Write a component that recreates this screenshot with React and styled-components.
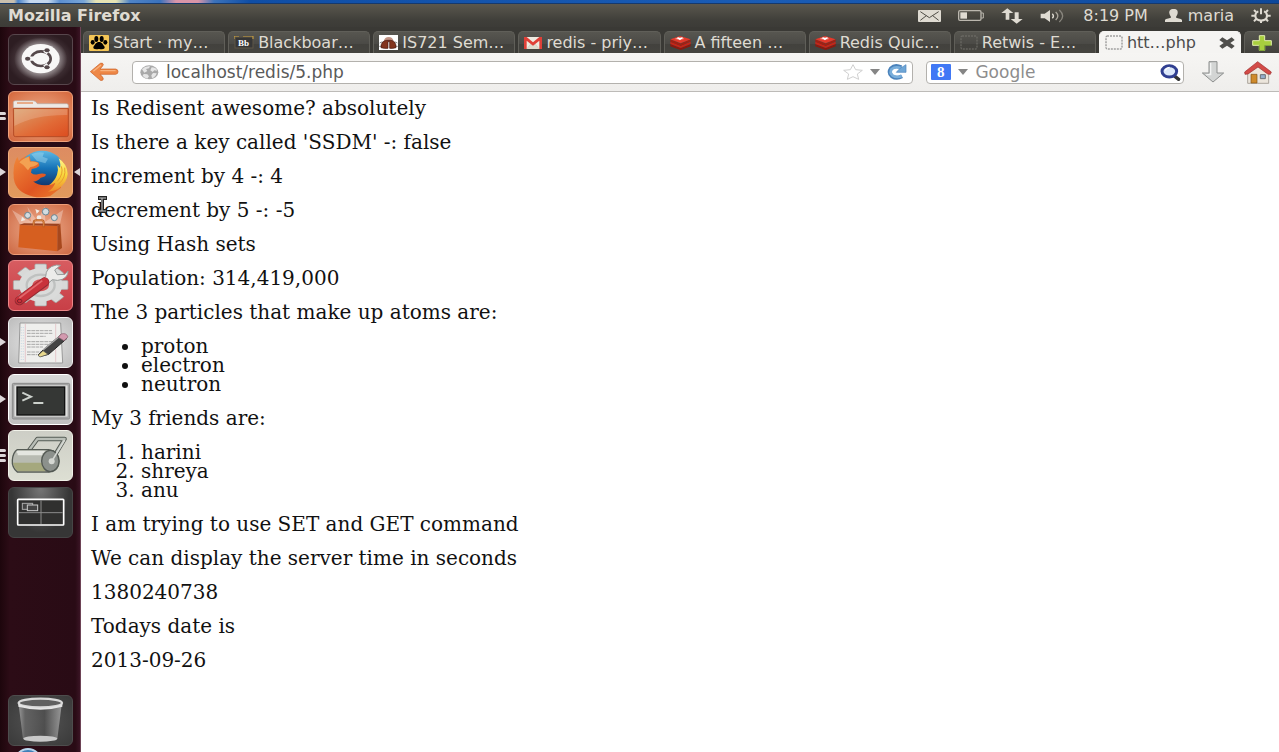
import React from "react";
import styled, { createGlobalStyle } from "styled-components";

const Global = createGlobalStyle`
  * { box-sizing: border-box; }
  html, body { margin: 0; background: #fff; }
  button, input { font: inherit; color: inherit; }
`;

const uiFont = `"DejaVu Sans", "Noto Sans", sans-serif`;

const Desktop = styled.div`
  min-height: 100vh;
  display: flex;
  flex-direction: column;
  font-family: ${uiFont};
  font-size: 16px;
`;

const HostStrip = styled.div`
  height: 4px;
  flex: none;
  border-bottom: 1px solid #16396c;
  background: linear-gradient(90deg, #c9bfae 0 14px, #4a83c8 18px, #c5d8ef 30px 48px, #5c8fd0 60px, #78a5d8 84px, #e6e3b4 96px 116px, #4f84c7 130px, #3a72bd 160px, #d995a8 176px 198px, #3c73bb 214px, #0f4ea6 250px, #1a5cb5 60%, #0d489b);
`;

const TopPanel = styled.header`
  height: 23px;
  flex: none;
  display: flex;
  align-items: center;
  justify-content: space-between;
  padding: 0 8px;
  color: #dfdbd2;
  background: linear-gradient(#5a574e, #403f3a 70%, #3c3b37);
`;

const AppName = styled.h1`
  margin: 0;
  font-size: 16px;
  line-height: 20px;
  font-weight: 700;
`;

const Indicators = styled.div`
  display: flex;
  align-items: center;
  gap: 17px;
`;

const Indicator = styled.button`
  display: flex;
  align-items: center;
  gap: 6px;
  padding: 0;
  border: 0;
  background: none;
  line-height: 20px;
  svg { display: block; }
`;

const Body = styled.div`
  flex: 1;
  display: flex;
`;

const Launcher = styled.nav`
  width: 81px;
  flex: none;
  display: flex;
  flex-direction: column;
  justify-content: space-between;
  padding: 7px 0 6px 8px;
  position: relative;
  overflow: hidden;
  border-right: 1px solid #6d4356;
  background: linear-gradient(90deg, #1d060c, #2c0c16 12%, #290b15 94%, #3a1424);
`;

const LauncherGroup = styled.div`
  height: 67vh;
  display: flex;
  flex-direction: column;
  justify-content: space-between;
`;

const Tile = styled.button`
  display: block;
  flex: none;
  position: relative;
  width: 65px;
  height: 51px;
  padding: 0;
  border: 1px solid ${(p) => p.$edge};
  border-radius: 6px;
  background: ${(p) => p.$bg};
  > svg { display: block; position: absolute; left: -1px; top: -1px; }
`;

const Pips = styled.span`
  position: absolute;
  left: -9px;
  top: 0;
  bottom: 0;
  display: flex;
  flex-direction: column;
  justify-content: center;
  gap: 2px;
`;

const Pip = styled.span`
  width: 6px;
  height: 3px;
  border-radius: 0 2px 2px 0;
  background: #ddd6d8;
`;

const Arrow = styled.span`
  position: absolute;
  top: 20px;
  border: 4px solid transparent;
  ${(p) => (p.$right ? "right: -8px; border-right: 6px solid #ddd6d8; border-left: 0;" : "left: -9px; border-left: 6px solid #ddd6d8; border-right: 0;")}
`;

const HostOrb = styled.span`
  position: absolute;
  left: 14px;
  bottom: -24px;
  width: 28px;
  height: 28px;
  border-radius: 50%;
  border: 2px solid #b9d5ec;
  background: #3f7fb8;
`;

const Browser = styled.main`
  flex: 1;
  min-width: 0;
  display: flex;
  flex-direction: column;
  background: #fff;
`;

const TabBar = styled.div`
  height: 26px;
  flex: none;
  display: flex;
  gap: 3px;
  padding: 4px 0 0 2px;
  background: #3a3935;
`;

const Tab = styled.button`
  flex: 1;
  min-width: 0;
  display: flex;
  align-items: center;
  gap: 4px;
  padding: 0 5px;
  border: 1px solid ${(p) => (p.$active ? "#f5f4f2" : "#605f59")};
  border-bottom: 0;
  border-radius: 5px 5px 0 0;
  background: ${(p) => (p.$active ? "#f5f4f2" : "linear-gradient(#575650, #4b4a46 55%, #42413d 56%, #45443f)")};
  color: ${(p) => (p.$active ? "#4c4c4c" : "#dfdbd2")};
  font-size: 16px;
  line-height: 20px;
  text-align: left;
  white-space: nowrap;
  svg { flex: none; }
`;

const TabTitle = styled.span`
  flex: 1;
`;

const NewTab = styled.button`
  width: 35px;
  flex: none;
  display: flex;
  align-items: center;
  justify-content: center;
  padding: 0;
  border: 1px solid #605f59;
  border-width: 1px 0 0 1px;
  border-radius: 5px 0 0 0;
  background: linear-gradient(#575650, #42413d);
`;

const Toolbar = styled.form`
  height: 39px;
  flex: none;
  display: flex;
  align-items: center;
  gap: 13px;
  padding: 0 7px 0 8px;
  border-bottom: 1px solid #bdbbb8;
  background: linear-gradient(#f6f5f3, #efeeec);
`;

const IconButton = styled.button`
  display: flex;
  flex: none;
  padding: 0;
  border: 0;
  background: none;
`;

const PageActions = styled.div`
  flex: none;
  display: flex;
  align-items: center;
  gap: 19px;
  padding-left: 4px;
`;

const Field = styled.label`
  flex: ${(p) => p.$flex};
  min-width: 0;
  height: 23px;
  display: flex;
  align-items: center;
  gap: 7px;
  padding: 0 ${(p) => p.$right}px 0 ${(p) => p.$left}px;
  border: 1px solid #b3b1ad;
  border-radius: 4px;
  background: #fff;
  svg { flex: none; }
`;

const TextBox = styled.input`
  flex: 1;
  min-width: 0;
  width: 100%;
  padding: 0;
  border: 0;
  outline: 0;
  background: none;
  font-size: 17px;
  line-height: 20px;
  color: #5a5a5a;
  &::placeholder { color: #8d8d8d; opacity: 1; }
`;

const Page = styled.article`
  flex: 1;
  padding: 7px 10px;
  position: relative;
  font-family: "DejaVu Serif", serif;
  font-size: 20px;
  line-height: 19px;
  color: #111;
  p, ul, ol { margin: 0 0 15px; }
  ul, ol { padding-left: 50px; }
`;

const TextCursor = styled.svg`
  position: absolute;
  left: 17px;
  top: 104px;
`;

const ink = "#dfdbd2";

function Mail() {
  return (
    <svg width="23" height="12" viewBox="0 0 69 36">
      <rect width="69" height="36" rx="3" fill={ink} />
      <path d="M7 5l27 18L62 5M7 31l18-14M62 31L44 17" fill="none" stroke="#504e47" strokeWidth="3" />
    </svg>
  );
}
function Battery() {
  return (
    <svg width="26" height="11" viewBox="0 0 78 33">
      <rect x="2" y="2" width="67" height="29" rx="4" fill="none" stroke="#bbb7ae" strokeWidth="4" />
      <path d="M70 9h6v15h-6" fill="none" stroke="#bbb7ae" strokeWidth="3" />
      <rect x="7" y="7" width="20" height="19" fill={ink} />
    </svg>
  );
}
function Network() {
  return (
    <svg width="22" height="16" viewBox="0 0 66 48">
      <path d="M19 1L37 15H25V35H14V15H1zM47 47L29 33H41V13H53V33H65z" fill={ink} />
    </svg>
  );
}
function Sound() {
  return (
    <svg width="26" height="14" viewBox="0 0 78 42">
      <path d="M2 14h12L30 3v36L14 28H2z" fill={ink} />
      <path d="M37 14q7 7 0 14" fill="none" stroke={ink} strokeWidth="4" />
      <path d="M47 9q13 12 0 24" fill="none" stroke="#aaa69c" strokeWidth="4" />
      <path d="M58 3q20 18 0 36" fill="none" stroke="#89867e" strokeWidth="4" />
    </svg>
  );
}
function Person() {
  return (
    <svg width="17" height="13" viewBox="0 0 51 39">
      <path d="M26 0c11 0 13 6 12 13-1 6-4 8-5 12 1 4 16 3 18 8v6H0v-6c2-5 17-4 18-8-1-4-4-6-5-12C12 6 15 0 26 0z" fill={ink} />
    </svg>
  );
}
function Gear() {
  return (
    <svg width="20" height="15" viewBox="0 0 60 45">
      <g stroke={ink} fill="none" strokeWidth="6">
        <path d="M22 10C10 14 10 32 22 36Q30 39 39 36C51 32 51 14 39 10" />
        <path d="M30 1V19M15 12L9 6M45 12L51 6M12 23H1M48 23H59M15 33L9 40M45 33L51 40M30 37V45" />
      </g>
    </svg>
  );
}

function Paw() {
  return (
    <svg width="20" height="16" viewBox="0 0 60 48">
      <rect width="60" height="48" rx="3" fill="#f3c556" />
      <ellipse cx="11" cy="22" rx="6" ry="7" />
      <ellipse cx="22" cy="12" rx="6" ry="9" />
      <ellipse cx="38" cy="12" rx="6" ry="9" />
      <ellipse cx="49" cy="22" rx="6" ry="7" />
      <path d="M30 21c9 0 12 8 16 13 4 7-3 11-16 8-13 3-20-1-16-8 4-5 7-13 16-13z" />
    </svg>
  );
}
const BbText = styled.text`
  font: 700 9px "Liberation Serif", serif;
  fill: #fff;
`;
function Bb() {
  return (
    <svg width="20" height="14" viewBox="0 0 20 14">
      <rect x="1" y="1" width="18" height="11" fill="#363636" stroke="#5f5646" />
      <path d="M0 3V0H5M9 0H19V3" stroke="#d0a440" fill="none" />
      <BbText x="4" y="10">Bb</BbText>
    </svg>
  );
}
function Beetle() {
  return (
    <svg width="19" height="15" viewBox="0 0 57 45">
      <rect width="57" height="45" fill="#fff" />
      <path d="M2 24q5-4 10-2M55 24q-5-4-10-2M1 34h9M56 34h-9" stroke="#444" strokeWidth="2" fill="none" />
      <path d="M14 19Q17 6 29 6t15 13z" fill="#c29384" />
      <path d="M6 38q-1-20 17-22h12q17 2 16 22-9 3-19 2V20h-5v20q-12 1-21-2z" fill="#83351f" stroke="#42170f" strokeWidth="2" />
    </svg>
  );
}
function Gmail() {
  return (
    <svg width="18" height="12" viewBox="0 0 54 36">
      <rect width="54" height="36" rx="3" fill="#eeeae0" />
      <path d="M8 36L21 20l6 5 6-5 13 16" fill="#dedbcf" stroke="#bbb4a4" />
      <path d="M0 0h8l19 16L46 0h8v36h-8V11L27 26 8 11v25H0z" fill="#df4038" />
    </svg>
  );
}
function Redis() {
  return (
    <svg width="21" height="14" viewBox="0 0 63 42">
      <path d="M1 25l31 12 30-12v6L32 42 1 31z" fill="#8d170e" />
      <path d="M1 17l31 12 30-12v7L32 36 1 24z" fill="#c62518" />
      <path d="M1 10l31 13 30-13v6L32 29 1 17z" fill="#a41e12" />
      <path d="M1 10L30 0l32 10-30 12z" fill="#e5392b" />
      <path d="M14 9l9-2-1-4 8 2 9-2-3 4 7 2-9 1-4 3-5-3z" fill="#fff" />
    </svg>
  );
}
function Blank({ color }) {
  return (
    <svg width="18" height="15" viewBox="0 0 18 15">
      <rect x="1" y="1" width="16" height="13" rx="1" fill="none" stroke={color} strokeDasharray="2 1" />
    </svg>
  );
}
function Cross() {
  return (
    <svg width="16" height="12" viewBox="0 0 48 36">
      <path d="M10 1L24 10 38 1l9 8-13 9 13 9-9 8-14-9-14 9-9-8 13-9L1 9z" fill="#504f4c" />
    </svg>
  );
}
function Plus() {
  return (
    <svg width="20" height="16" viewBox="0 0 60 48">
      <path d="M22 2H38V17H58V31H38V46H22V31H2V17H22z" fill="#a8cf3e" stroke="#e3efac" strokeWidth="3" />
      <path d="M22 31v15h16V31h20" fill="none" stroke="#729c22" strokeWidth="3" />
    </svg>
  );
}
function Back() {
  return (
    <svg width="30" height="20" viewBox="0 0 90 60">
      <path d="M4 29L34 4q8-3 9 4-1 4-10 13H80q7 1 7 8t-7 8H33q10 9 10 14-1 6-9 4z" fill="#ee8746" stroke="#c95d22" strokeWidth="2" />
      <path d="M13 28L36 9M34 26H80" stroke="#f8b27e" strokeWidth="4" />
    </svg>
  );
}
function Globe() {
  return (
    <svg width="19" height="15" viewBox="0 0 57 45">
      <ellipse cx="28" cy="22" rx="27" ry="21" fill="#a9a9a9" />
      <path d="M6 13Q16 2 30 4l-3 6-9 2 4 6-9 5zM35 7q12 0 17 10l-9-1-5 5-7-5zM11 27l11 1 5 6-5 7Q12 38 8 32zM39 24l11 1q-3 11-14 15l-2-9z" fill="#e6e6e6" />
    </svg>
  );
}
function Star() {
  return (
    <svg width="20" height="16" viewBox="0 0 60 48">
      <path d="M30 2l8 15 20 2-15 11 4 16-17-8-17 8 4-16L2 19l20-2z" fill="#fff" stroke="#cfcfcf" strokeWidth="3" />
    </svg>
  );
}
function Caret() {
  return (
    <svg width="10" height="6" viewBox="0 0 10 6"><path d="M0 0h10L5 6z" fill="#858585" /></svg>
  );
}
function Reload() {
  return (
    <svg width="20" height="16" viewBox="0 0 60 48">
      <path d="M45 37Q29 46 15 37 3 26 12 13q12-12 31-3" fill="none" stroke="#4a82bb" strokeWidth="12" />
      <path d="M44 36Q29 43 16 34 7 26 14 15q12-9 29-2" fill="none" stroke="#79aedb" strokeWidth="8" />
      <path d="M57 2V25H28L38 14z" fill="#6fa6d6" stroke="#4a82bb" strokeWidth="2" />
    </svg>
  );
}
const GText = styled.text`
  font: 700 15px "Liberation Serif", serif;
  fill: #fff;
`;
function GoogleG() {
  return (
    <svg width="20" height="18" viewBox="0 0 20 18">
      <rect y="1" width="20" height="16" rx="1" fill="#4078f5" />
      <GText x="6" y="14">8</GText>
    </svg>
  );
}
function Lens() {
  return (
    <svg width="21" height="17" viewBox="0 0 63 51">
      <path d="M42 35L56 46" stroke="#333" strokeWidth="10" strokeLinecap="round" />
      <ellipse cx="28" cy="22" rx="22" ry="17" fill="#dce8fa" stroke="#303f91" strokeWidth="9" />
      <path d="M16 20q2-9 13-10" stroke="#fff" strokeWidth="4" fill="none" />
    </svg>
  );
}
function Download() {
  return (
    <svg width="24" height="22" viewBox="0 0 72 66">
      <path d="M24 2H48V36H68L36 63 4 36H24z" fill="#d3d5d4" stroke="#8d8f8e" strokeWidth="3" />
      <path d="M29 6V41H16" fill="none" stroke="#f3f4f3" strokeWidth="4" />
    </svg>
  );
}
function House() {
  return (
    <svg width="28" height="23" viewBox="0 0 84 69">
      <path d="M11 31L42 9l32 22v36H11z" fill="#ece6dc" stroke="#8b8378" strokeWidth="2" />
      <path d="M21 40H39V66H21z" fill="#cf8b2c" stroke="#7e4f13" strokeWidth="2" />
      <path d="M49 41H64V53H49z" fill="#94aecb" stroke="#6b6f73" strokeWidth="3" />
      <path d="M2 33L41 2 82 33l-3 7-8-1-29-21L12 39l-9 1z" fill="#d34b47" stroke="#9b2928" strokeWidth="2" />
    </svg>
  );
}

function Art({ children }) {
  return <svg width="65" height="51" viewBox="0 0 195 153">{children}</svg>;
}
function UbuntuArt() {
  return (
    <Art>
      <defs><radialGradient id="halo"><stop offset="0.5" stopColor="#fff" stopOpacity=".6" /><stop offset="1" stopColor="#fff" stopOpacity="0" /></radialGradient></defs>
      <ellipse cx="98" cy="75" rx="80" ry="65" fill="url(#halo)" />
      <ellipse cx="98" cy="74" rx="57" ry="44" fill="#f8f7f7" />
      <ellipse cx="99" cy="74" rx="29" ry="22" fill="none" stroke="#55484b" strokeWidth="8" />
      <path d="M62 74h16M111 57l8-11M111 91l8 11" stroke="#f8f7f7" strokeWidth="13" />
      <g fill="#55484b"><ellipse cx="59" cy="74" rx="8" ry="6" /><ellipse cx="117" cy="49" rx="8" ry="6" /><ellipse cx="117" cy="100" rx="8" ry="6" /></g>
    </Art>
  );
}
function FilesArt() {
  return (
    <Art>
      <defs><linearGradient id="fold" x1="0" y1="0" x2="1" y2="1"><stop stopColor="#d9a06c" /><stop offset=".6" stopColor="#e16a36" /><stop offset="1" stopColor="#dc4d20" /></linearGradient></defs>
      <path d="M16 52V34q0-5 6-5H76q7 0 12 9h88q5 0 5 5v9z" fill="#eee9e5" stroke="#b6aaa4" strokeWidth="2" />
      <path d="M27 36H75" stroke="#e68b59" strokeWidth="4" />
      <path d="M16 52H181V132q0 5-6 5H23q-6 0-6-5z" fill="url(#fold)" stroke="#b64b25" strokeWidth="3" />
      <path d="M19 55H178V72Q80 71 19 105z" fill="#fff" opacity=".17" />
    </Art>
  );
}
function FirefoxArt() {
  return (
    <Art>
      <defs>
        <linearGradient id="sea" x1="0" y1="0" x2="0" y2="1"><stop stopColor="#5fb9e4" /><stop offset=".5" stopColor="#1673b8" /><stop offset="1" stopColor="#12356c" /></linearGradient>
        <linearGradient id="fox" x1="0" y1="0" x2="1" y2="1"><stop stopColor="#f0883a" /><stop offset=".6" stopColor="#df5522" /><stop offset="1" stopColor="#ec7a2b" /></linearGradient>
        <linearGradient id="tail" x1="0" y1="0" x2="0" y2="1"><stop stopColor="#fff38a" /><stop offset=".5" stopColor="#f8d83c" /><stop offset="1" stopColor="#ee8b2c" /></linearGradient>
      </defs>
      <ellipse cx="97" cy="78" rx="80" ry="61" fill="url(#fox)" />
      <ellipse cx="102" cy="64" rx="64" ry="53" fill="url(#sea)" />
      <path d="M70 22q18-9 38-5l-4 12 16 6-8 14-26-8z" fill="#a5daf0" opacity=".45" />
      <path d="M17 83Q15 49 28 30l6 15q9-9 21-12l10-7 3 17q14-1 24 4l2 10q-8 7-23 9l-2 11q9 8 20 5 13-5 24-1 3 8-15 11-12 13-23 11 17 15 48 11 27-7 36-30v38l-32 25q-28 6-50 2-54-11-60-56z" fill="url(#fox)" />
      <path d="M34 46q9-11 28-17l4 15q14-2 25 4-4 9-24 12l-7 10q-12-17-26-24z" fill="#f3a152" />
      <path d="M152 34q26 17 27 47-2 28-30 46-16 7-29 7 17-11 22-27-12 7-18 7 17-14 23-31 5-16 1-30l8 10q3-12-4-29z" fill="url(#tail)" />
      <path d="M160 58q8 22-12 45M170 62q5 31-19 50" stroke="#e99e2f" strokeWidth="3" fill="none" />
    </Art>
  );
}
function StoreArt() {
  return (
    <Art>
      <path d="M35 60L12 18 70 53 58 8 88 52 110 7 112 53 166 17 155 63z" fill="#fff" opacity=".3" />
      <g fill="#d3dce0" stroke="#698693" strokeWidth="3"><circle cx="59" cy="34" r="9" /><circle cx="113" cy="23" r="10" /><circle cx="139" cy="41" r="9" /></g>
      <g fill="#f0ece5"><path d="M82 15l13 5-9 9zM42 38l11 10-14 4z" /><circle cx="93" cy="41" r="7" /></g>
      <path d="M35 63L148 66V142L31 130z" fill="#d65f20" />
      <path d="M148 66l9-7 5 73-14 10z" fill="#a7481d" />
      <path d="M33 63l15-5 109 1-9 7z" fill="#9b4220" />
      <path d="M77 67V55q1-6 8-6h15q7 0 7 6v15" fill="none" stroke="#b7591f" strokeWidth="6" />
      <path d="M77 65V55q1-6 8-6h15q7 0 7 6v12" fill="none" stroke="#e8a05d" strokeWidth="2" />
    </Art>
  );
}
function SettingsArt() {
  const teeth = [0, 45, 90, 135];
  return (
    <Art>
      <g fill="#d8d9d8" stroke="#a5a9a8" strokeWidth="2">
        {teeth.map((a) => <rect key={a} x="84" y="9" width="28" height="132" rx="3" transform={`translate(98 75) scale(1.24 .95) rotate(${a}) translate(-98 -75)`} />)}
      </g>
      <ellipse cx="98" cy="75" rx="65" ry="50" fill="#dadbda" />
      <ellipse cx="98" cy="76" rx="42" ry="32" fill="none" stroke="#bfc1c0" strokeWidth="7" />
      <ellipse cx="98" cy="76" rx="25" ry="18" fill="#d55257" />
      <path d="M113 50q0-29 32-35l13 1-18 14 8 14 23-1 9-10q0 17-17 25-14 6-30 1l-10 9-19-10z" fill="#ececea" stroke="#979c9b" strokeWidth="3" />
      <path d="M34 122L110 66" stroke="#932c33" strokeWidth="28" strokeLinecap="round" />
      <path d="M34 121L110 65" stroke="#c9323b" strokeWidth="23" strokeLinecap="round" />
      <path d="M34 114L103 62" stroke="#e2686c" strokeWidth="5" />
      <ellipse cx="35" cy="123" rx="7" ry="5" fill="none" stroke="#7e222b" strokeWidth="3" />
    </Art>
  );
}
function EditorArt() {
  return (
    <Art>
      <path d="M36 18H158l6 120H32z" fill="#efefed" stroke="#999" strokeWidth="3" />
      <path d="M52 20v115M143 20v115" stroke="#e0b5bb" strokeWidth="2" />
      <path d="M40 30v100M46 30v100" stroke="#b5cce0" strokeWidth="2" strokeDasharray="3 5" />
      <path d="M57 41h75M57 49h76M57 58h56M57 74h76M57 82h74M57 90h48M57 105h48M57 113h31" stroke="#a8a8a8" strokeWidth="3" strokeDasharray="11 2" />
      <path d="M90 114l16-16 53-45 18 11-55 48-24 6z" fill="#444" stroke="#222" strokeWidth="3" />
      <path d="M105 99l52-43" stroke="#aaa" strokeWidth="4" />
      <path d="M90 115l15-14 15 11-24 8z" fill="#e8d88c" stroke="#555" strokeWidth="2" />
      <path d="M151 61l8-10q16-5 21 9l-12 11z" fill="#d39aaf" stroke="#8d6473" strokeWidth="2" />
    </Art>
  );
}
function TerminalArt() {
  return (
    <Art>
      <rect x="13" y="28" width="172" height="107" rx="4" fill="#aaa" stroke="#8a8a8a" strokeWidth="3" />
      <rect x="18" y="33" width="162" height="96" fill="#e0e0df" stroke="#999" strokeWidth="2" />
      <rect x="27" y="39" width="143" height="84" fill="#353735" stroke="#111" strokeWidth="4" />
      <path d="M43 56l26 12-26 12M76 87h30" fill="none" stroke="#ccd1cc" strokeWidth="6" />
    </Art>
  );
}
function RollerArt() {
  return (
    <Art>
      <path d="M55 72L88 27H170L129 95" fill="none" stroke="#555b55" strokeWidth="13" strokeLinejoin="round" />
      <path d="M55 72L88 27H170L129 95" fill="none" stroke="#b9beb7" strokeWidth="7" strokeLinejoin="round" />
      <path d="M28 59h94q30 4 31 35 0 28-30 32H28q-17-14-15-36 2-23 15-31z" fill="#b8bbb2" stroke="#555b55" strokeWidth="4" />
      <path d="M15 98h90l7 26H30q-13-10-15-26z" fill="#a5a87e" />
      <path d="M26 66h84M29 72h74" stroke="#e4e6e0" strokeWidth="8" />
      <ellipse cx="127" cy="93" rx="26" ry="32" fill="#8c918c" stroke="#535953" strokeWidth="4" />
      <ellipse cx="131" cy="94" rx="9" ry="9" fill="#d5d8d3" />
      <path d="M131 94L170 30" stroke="#d4d7d2" strokeWidth="5" />
    </Art>
  );
}
function WorkspacesArt() {
  return (
    <Art>
      <rect x="29" y="37" width="138" height="77" rx="2" fill="#30302f" stroke="#fff" strokeWidth="5" />
      <path d="M99 40v71M32 77h132" stroke="#8b8b8b" strokeWidth="3" />
      <rect x="43" y="49" width="31" height="18" fill="#444" stroke="#aaa" strokeWidth="3" />
      <rect x="58" y="54" width="31" height="17" fill="#444" stroke="#ccc" strokeWidth="3" />
    </Art>
  );
}
function TrashArt() {
  return (
    <Art>
      <defs><linearGradient id="bin"><stop stopColor="#aaa" /><stop offset=".15" stopColor="#686868" /><stop offset=".6" stopColor="#4e4e4e" /><stop offset="1" stopColor="#aaa" /></linearGradient></defs>
      <path d="M32 30L45 131q52 14 103 0L161 30z" fill="url(#bin)" opacity=".8" />
      <ellipse cx="97" cy="131" rx="51" ry="9" fill="#c9c9c9" />
      <ellipse cx="97" cy="24" rx="65" ry="13" fill="#606060" stroke="#d8d8d8" strokeWidth="7" />
      <path d="M31 27q65 24 132 0v8q-65 18-132 0z" fill="#e4e4e4" />
    </Art>
  );
}

const apps = [
  { name: "Dash home", art: UbuntuArt, bg: "radial-gradient(#76686c, #2d1d22 75%)", edge: "#57464c" },
  { name: "Files", art: FilesArt, bg: "radial-gradient(#f0b391, #d4663b)", edge: "#efa27c", pips: 2 },
  { name: "Firefox", art: FirefoxArt, bg: "linear-gradient(#dd8c62, #e19a5c)", edge: "#f2af7d", arrow: true, focused: true },
  { name: "Software Center", art: StoreArt, bg: "radial-gradient(#f2b292, #cc6843)", edge: "#ee9d77" },
  { name: "System Settings", art: SettingsArt, bg: "linear-gradient(#d75c60, #c83f47)", edge: "#ed8788" },
  { name: "Text Editor", art: EditorArt, bg: "radial-gradient(#e9e9e9, #bcbcbc)", edge: "#f2f2f2", arrow: true },
  { name: "Terminal", art: TerminalArt, bg: "linear-gradient(#d7d7d7, #c0c0c0)", edge: "#fff", arrow: true },
  { name: "Disk Cleaner", art: RollerArt, bg: "linear-gradient(#cdcec6, #dddfd3)", edge: "#f1f2e9", pips: 3 },
  { name: "Workspaces", art: WorkspacesArt, bg: "radial-gradient(ellipse at top, #767676, #363636 65%)", edge: "#464646" },
];

const trash = { name: "Trash", art: TrashArt, bg: "radial-gradient(#555, #393939)", edge: "#4d4d4d" };

const tabs = [
  { icon: <Paw />, title: "Start · my…" },
  { icon: <Bb />, title: "Blackboar…" },
  { icon: <Beetle />, title: "IS721 Sem…" },
  { icon: <Gmail />, title: "redis - priy…" },
  { icon: <Redis />, title: "A fifteen …" },
  { icon: <Redis />, title: "Redis Quic…" },
  { icon: <Blank color="#74736d" />, title: "Retwis - E…" },
];

function LauncherTile({ app }) {
  const Drawing = app.art;
  return (
    <Tile type="button" aria-label={app.name} $bg={app.bg} $edge={app.edge}>
      <Drawing />
      {app.pips && <Pips>{Array.from({ length: app.pips }, (_, i) => <Pip key={i} />)}</Pips>}
      {app.arrow && <Arrow />}
      {app.focused && <Arrow $right />}
    </Tile>
  );
}

export default function App() {
  return (
    <Desktop>
      <Global />
      <HostStrip />
      <TopPanel>
        <AppName>Mozilla Firefox</AppName>
        <Indicators>
          <Indicator type="button" aria-label="Messages"><Mail /></Indicator>
          <Indicator type="button" aria-label="Battery"><Battery /></Indicator>
          <Indicator type="button" aria-label="Network"><Network /></Indicator>
          <Indicator type="button" aria-label="Volume"><Sound /></Indicator>
          <Indicator type="button">8:19 PM</Indicator>
          <Indicator type="button"><Person />maria</Indicator>
          <Indicator type="button" aria-label="System"><Gear /></Indicator>
        </Indicators>
      </TopPanel>
      <Body>
        <Launcher aria-label="Launcher">
          <LauncherGroup>
            {apps.map((app) => <LauncherTile key={app.name} app={app} />)}
          </LauncherGroup>
          <LauncherTile app={trash} />
          <HostOrb />
        </Launcher>
        <Browser>
          <TabBar>
            {tabs.map((t) => (
              <Tab key={t.title} type="button">{t.icon}<TabTitle>{t.title}</TabTitle></Tab>
            ))}
            <Tab type="button" $active><Blank color="#777" /><TabTitle>htt…php</TabTitle><Cross /></Tab>
            <NewTab type="button" aria-label="New tab"><Plus /></NewTab>
          </TabBar>
          <Toolbar onSubmit={(e) => e.preventDefault()}>
            <IconButton type="button" aria-label="Back"><Back /></IconButton>
            <Field $flex="784 1 0" $left={7} $right={5}>
              <Globe />
              <TextBox aria-label="Address" defaultValue="localhost/redis/5.php" />
              <Star /><Caret /><Reload />
            </Field>
            <Field $flex="255 1 0" $left={4} $right={2}>
              <GoogleG /><Caret />
              <TextBox aria-label="Search" placeholder="Google" />
              <Lens />
            </Field>
            <PageActions>
              <IconButton type="button" aria-label="Downloads"><Download /></IconButton>
              <IconButton type="button" aria-label="Home"><House /></IconButton>
            </PageActions>
          </Toolbar>
          <Page>
            <p>Is Redisent awesome? absolutely</p>
            <p>Is there a key called 'SSDM' -: false</p>
            <p>increment by 4 -: 4</p>
            <p>decrement by 5 -: -5</p>
            <p>Using Hash sets</p>
            <p>Population: 314,419,000</p>
            <p>The 3 particles that make up atoms are:</p>
            <ul>
              <li>proton</li>
              <li>electron</li>
              <li>neutron</li>
            </ul>
            <p>My 3 friends are:</p>
            <ol>
              <li>harini</li>
              <li>shreya</li>
              <li>anu</li>
            </ol>
            <p>I am trying to use SET and GET command</p>
            <p>We can display the server time in seconds</p>
            <p>1380240738</p>
            <p>Todays date is</p>
            <p>2013-09-26</p>
            <TextCursor width="9" height="17" viewBox="0 0 9 17">
              <path d="M0 0h9v4H6v9h3v4H0v-4h3V4H0z" fill="#222" />
              <path d="M1 2h7M4 2v13M1 15h7" stroke="#ccc" fill="none" />
            </TextCursor>
          </Page>
        </Browser>
      </Body>
    </Desktop>
  );
}
